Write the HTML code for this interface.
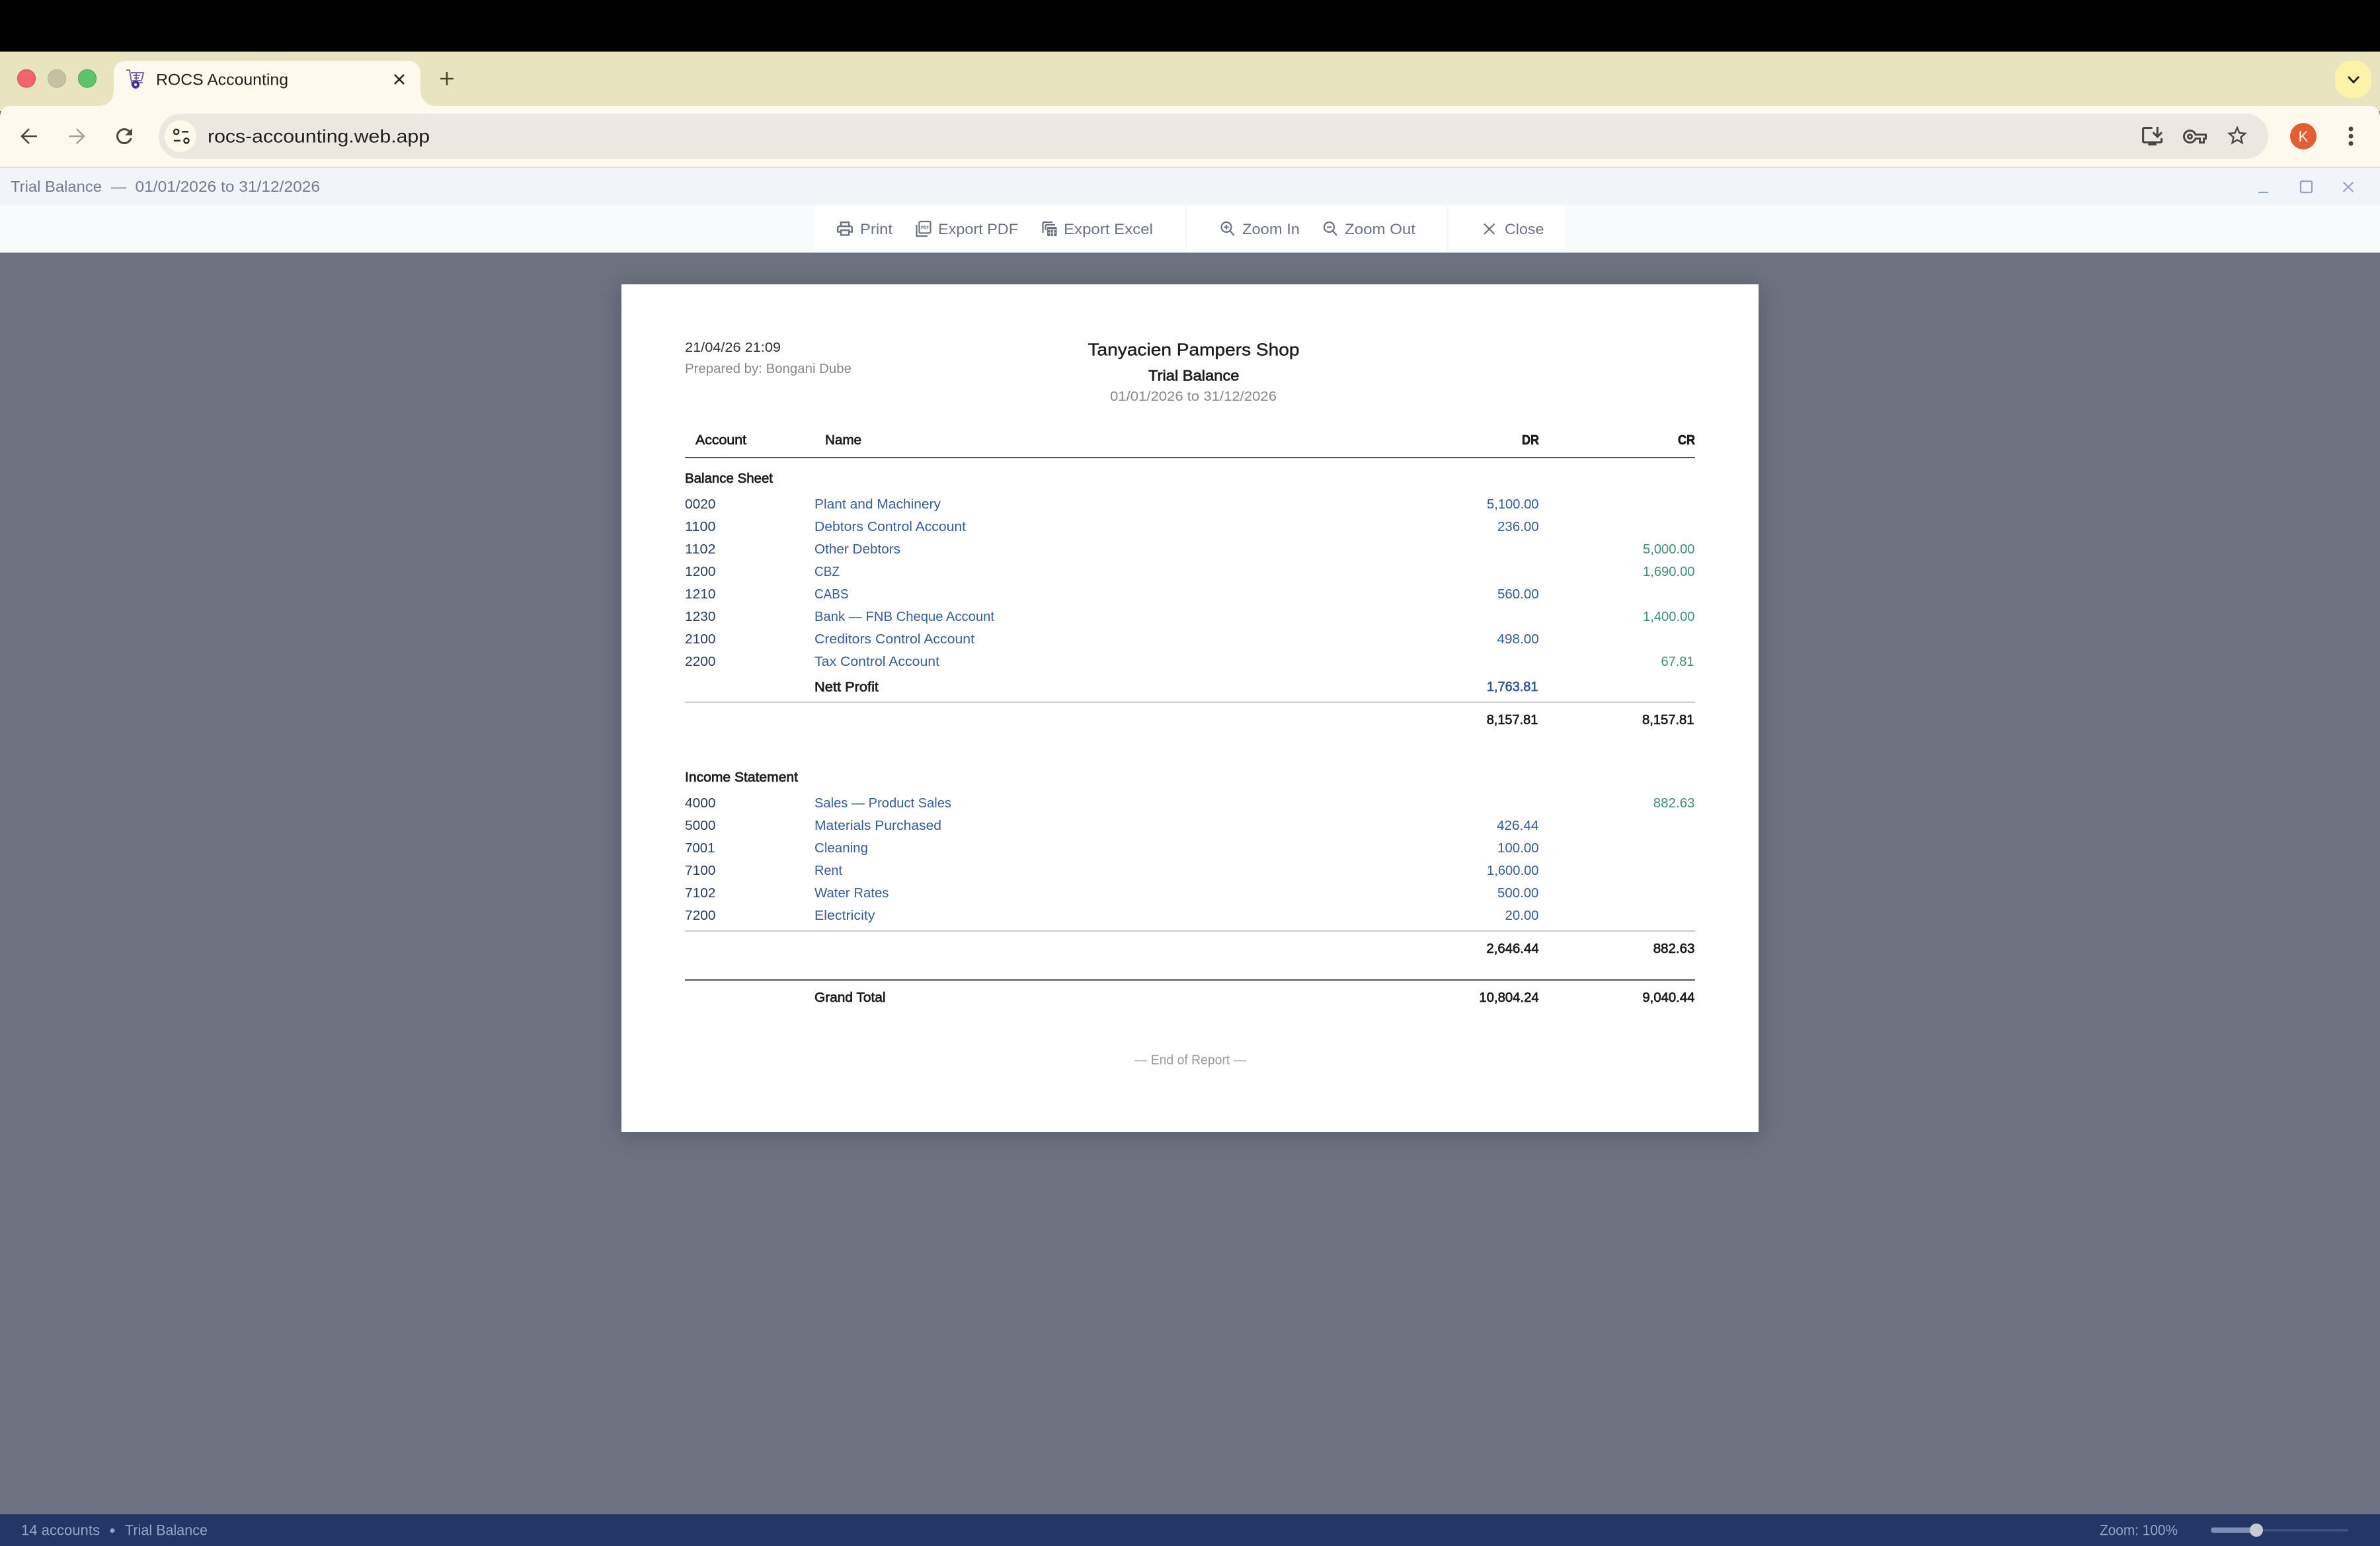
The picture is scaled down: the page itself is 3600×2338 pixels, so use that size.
<!DOCTYPE html>
<html lang="en">
<head>
<meta charset="utf-8">
<title>ROCS Accounting</title>
<style>
html,body{margin:0;padding:0;width:3600px;height:2338px;overflow:hidden;background:#6b7280}
svg{display:block;position:absolute;left:0;top:0}
text{font-family:"Liberation Sans",sans-serif;white-space:pre}
#pg{position:absolute;left:940px;top:430px;width:1720px;height:1282px;background:#fff;box-shadow:0 4px 32px rgba(0,0,0,.2)}
.r{font-size:20.7px}
.k{fill:#2b3f63}
.n{fill:#335e99}
.g{fill:#3f9070}
.m{stroke-width:.7px;fill:#1c1c1c;stroke:#1c1c1c}
.mb{stroke-width:.7px;fill:#2f5b97;stroke:#2f5b97}
.t{font-size:23px;fill:#737b8e}
.tb{font-size:22.5px;fill:#6b7280}
.s{font-size:22px;fill:#93a5c6}
.ic{fill:none;stroke:#6b7280;stroke-width:2.2}
</style>
</head>
<body>
<div id="pg"></div>
<svg width="3600" height="2338" viewBox="0 0 3600 2338" xmlns="http://www.w3.org/2000/svg">
<!-- browser chrome -->
<rect x="0" y="0" width="3600" height="78" fill="#000"/>
<rect x="0" y="78" width="3600" height="90" fill="#e9e4c0"/>
<path d="M0 254V178Q0 160 18 160H3582Q3600 160 3600 178V254Z" fill="#fdf9ec"/>
<rect x="0" y="252" width="3600" height="2" fill="#e5e2cf"/>
<path d="M148 160C165 160 172 150 172 137V112Q172 92 192 92H616Q636 92 636 112V137C636 150 645 160 660 160Z" fill="#fdf9ec"/>
<circle cx="40" cy="118.7" r="13.5" fill="#f1666a" stroke="#d9484c" stroke-width="1"/>
<circle cx="86" cy="118.7" r="13.5" fill="#c5c0a0" stroke="#b4af90" stroke-width="1"/>
<circle cx="132" cy="118.7" r="13.5" fill="#5ec36a" stroke="#45a852" stroke-width="1"/>
<!-- favicon -->
<g fill="none" stroke="#6a5aa8" stroke-width="1.8">
<path d="M191 106H196L199 125H216"/>
<path d="M198 110H217L214 122H200"/>
<path d="M201 114H212M203 118H210M206 111V121"/>
</g>
<circle cx="205" cy="128" r="6" fill="#43309a"/>
<circle cx="205" cy="128" r="2" fill="#fdf9ec"/>
<text x="236" y="128.3" font-size="24.5" fill="#1f1f1a" textLength="200" lengthAdjust="spacingAndGlyphs">ROCS Accounting</text>
<path d="M597 113L611 127M611 113L597 127" fill="none" stroke="#1f1f1a" stroke-width="2.4"/>
<path d="M676 109V129M666 119H686" fill="none" stroke="#4a4735" stroke-width="2.6"/>
<rect x="3532" y="92" width="55" height="56" rx="24" fill="#fdf3a8"/>
<path d="M3552 116L3560 124.5L3568 116" fill="none" stroke="#1f1f1a" stroke-width="2.8"/>
<!-- nav -->
<path d="M56 206H33M44 195L33 206L44 217" fill="none" stroke="#4b4a35" stroke-width="2.6"/>
<path d="M104 206H127M116 195L127 206L116 217" fill="none" stroke="#a8a598" stroke-width="2.6"/>
<path transform="translate(170 188) scale(1.5)" fill="#4b4a35" d="M17.65 6.35C16.2 4.9 14.21 4 12 4c-4.42 0-7.99 3.58-7.99 8s3.57 8 7.99 8c3.73 0 6.84-2.55 7.73-6h-2.08c-.82 2.33-3.04 4-5.65 4-3.31 0-6-2.69-6-6s2.69-6 6-6c1.66 0 3.14.69 4.22 1.78L13 11h7V4l-2.35 2.35z"/>
<rect x="240" y="172" width="3191" height="68" rx="34" fill="#ece8e1"/>
<circle cx="273" cy="206" r="24" fill="#fdf9ec"/>
<g fill="none" stroke="#2f2e22" stroke-width="2.4">
<circle cx="266.7" cy="199.3" r="3.6"/><path d="M275 199.3H285"/>
<path d="M263 212.8H273"/><circle cx="282" cy="212.8" r="3.6"/>
</g>
<text x="314" y="215.7" font-size="28" fill="#1f1f1a" textLength="336" lengthAdjust="spacingAndGlyphs">rocs-accounting.web.app</text>
<path transform="translate(3237 187.3) scale(1.55)" fill="#4a473c" d="M20 17H4V5h8V3H4c-1.11 0-2 .89-2 2v12c0 1.1.89 2 2 2h4v2h8v-2h4c1.1 0 2-.9 2-2v-3h-2v3z"/>
<path transform="translate(3237 187.3) scale(1.55)" fill="#4a473c" d="M17 14l5-5-1.41-1.41L18 10.17V3h-2v7.17l-2.59-2.58L12 9l5 5z"/>
<path transform="translate(3302 188.5) scale(1.5)" fill="#4a473c" d="M22 19h-6v-4h-2.68c-1.14 2.42-3.6 4-6.32 4-3.86 0-7-3.14-7-7s3.14-7 7-7c2.72 0 5.17 1.58 6.32 4H24v6h-2v4zm-4-2h2v-4h2v-2H11.94l-.23-.67C11.01 8.34 9.11 7 7 7c-2.76 0-5 2.24-5 5s2.24 5 5 5c2.11 0 4.01-1.34 4.71-3.33l.23-.67H18v4zM7 15c-1.65 0-3-1.35-3-3s1.35-3 3-3 3 1.35 3 3-1.35 3-3 3zm0-4c-.55 0-1 .45-1 1s.45 1 1 1 1-.45 1-1-.45-1-1-1z"/>
<path transform="translate(3366 187) scale(1.5)" fill="#4a473c" d="M22 9.24l-7.19-.62L12 2 9.19 8.63 2 9.24l5.46 4.73L5.82 21 12 17.27 18.18 21l-1.63-7.03L22 9.24zM12 15.4l-3.76 2.27 1-4.28-3.32-2.88 4.38-.38L12 6.1l1.71 4.04 4.38.38-3.32 2.88 1 4.28L12 15.4z"/>
<circle cx="3484" cy="206" r="20" fill="#e35f33"/>
<text x="3484" y="214" font-size="22" fill="#fff" text-anchor="middle">K</text>
<circle cx="3556" cy="195" r="3.5" fill="#4a473c"/><circle cx="3556" cy="206" r="3.5" fill="#4a473c"/><circle cx="3556" cy="217" r="3.5" fill="#4a473c"/>
<!-- title bar -->
<rect x="0" y="254" width="3600" height="56" fill="#f1f5fa"/>
<text class="t" x="16" y="290" textLength="138" lengthAdjust="spacingAndGlyphs">Trial Balance</text>
<text class="t" x="168" y="290" textLength="23" lengthAdjust="spacingAndGlyphs">—</text>
<text class="t" x="204.500" y="290" textLength="279.500" lengthAdjust="spacingAndGlyphs">01/01/2026 to 31/12/2026</text>
<path d="M3416 291H3431" stroke="#94a3b8" stroke-width="2.2"/>
<rect x="3480" y="274" width="17" height="17" rx="2" fill="none" stroke="#94a3b8" stroke-width="2.2"/>
<path d="M3544.500 275.500L3559.500 290M3559.500 275.500L3544.500 290" stroke="#94a3b8" stroke-width="2.2" fill="none"/>
<!-- tool bar -->
<rect x="0" y="310" width="3600" height="72" fill="#f8fafc"/>
<rect x="1232" y="312" width="1136" height="68" fill="#fff"/>
<rect x="1793" y="312" width="1.500" height="68" fill="#f1f3f6"/>
<rect x="2189" y="312" width="1.500" height="68" fill="#f1f3f6"/>
<path transform="translate(1263.6 331.4) scale(1.2)" fill="#6b7280" d="M19 8h-1V3H6v5H5c-1.66 0-3 1.34-3 3v6h4v4h12v-4h4v-6c0-1.66-1.34-3-3-3zM8 5h8v3H8V5zm8 12v2H8v-4h8v2zm2-2v-2H6v2H4v-4c0-.55.45-1 1-1h14c.55 0 1 .45 1 1v4h-2z"/>
<text class="tb" x="1301" y="354" textLength="49" lengthAdjust="spacingAndGlyphs">Print</text>
<path class="ic" d="M1386.500 340V357H1403"/>
<rect class="ic" x="1390.500" y="335" width="17" height="17.500" rx="2"/>
<text x="1393" y="346.500" font-size="7" font-weight="bold" fill="#6b7280" textLength="12" lengthAdjust="spacingAndGlyphs">PDF</text>
<text class="tb" x="1419" y="354" textLength="121" lengthAdjust="spacingAndGlyphs">Export PDF</text>
<path class="ic" d="M1577.500 352V338Q1577.500 336 1579.500 336H1592"/>
<path class="ic" d="M1581.500 348V342Q1581.500 340 1583.500 340H1596"/>
<rect x="1584" y="343" width="14.500" height="14" rx="1.500" fill="#6b7280"/>
<path d="M1585 347.500H1597.500M1589 347.500V357M1593.500 347.500V357M1585 352.300H1597.500" stroke="#fff" stroke-width="1.200" fill="none"/>
<text class="tb" x="1609" y="354" textLength="135" lengthAdjust="spacingAndGlyphs">Export Excel</text>
<circle class="ic" cx="1855" cy="343.500" r="7.500"/>
<path class="ic" d="M1860.500 349L1866.500 356M1851.500 343.500H1858.500M1855 340V347"/>
<text class="tb" x="1879" y="354" textLength="87" lengthAdjust="spacingAndGlyphs">Zoom In</text>
<circle class="ic" cx="2010.500" cy="343.500" r="7.500"/>
<path class="ic" d="M2016 349L2022 356M2007 343.500H2014"/>
<text class="tb" x="2034" y="354" textLength="107" lengthAdjust="spacingAndGlyphs">Zoom Out</text>
<path class="ic" d="M2245 338.500L2260.500 354M2260.500 338.500L2245 354"/>
<text class="tb" x="2276" y="354" textLength="59.500" lengthAdjust="spacingAndGlyphs">Close</text>

<!-- report header -->
<text x="1036" y="532" font-size="20.7" fill="#333" textLength="145" lengthAdjust="spacingAndGlyphs">21/04/26 21:09</text>
<text x="1036" y="564" font-size="20.7" fill="#888" textLength="252" lengthAdjust="spacingAndGlyphs">Prepared by: Bongani Dube</text>
<text x="1645.500" y="537.300" font-size="26" fill="#1c1c1c" stroke="#1c1c1c" stroke-width=".4" textLength="320" lengthAdjust="spacingAndGlyphs">Tanyacien Pampers Shop</text>
<text class="m" x="1737" y="575.700" font-size="22.500" textLength="137.500" lengthAdjust="spacingAndGlyphs">Trial Balance</text>
<text x="1679" y="606" font-size="20.7" fill="#888" textLength="252" lengthAdjust="spacingAndGlyphs">01/01/2026 to 31/12/2026</text>

<text class="r m" x="1052" y="672" textLength="77" lengthAdjust="spacingAndGlyphs">Account</text>
<text class="r m" x="1248" y="672" textLength="55" lengthAdjust="spacingAndGlyphs">Name</text>
<text class="r m" x="2302" y="672" font-weight="bold" textLength="26" lengthAdjust="spacingAndGlyphs">DR</text>
<text class="r m" x="2538" y="672" font-weight="bold" textLength="26" lengthAdjust="spacingAndGlyphs">CR</text>
<rect x="1036" y="691" width="1528" height="2" fill="#555"/>

<text class="r m" x="1036" y="730" textLength="133" lengthAdjust="spacingAndGlyphs">Balance Sheet</text>

<text class="r k" x="1036" y="769" textLength="46.500" lengthAdjust="spacingAndGlyphs">0020</text>
<text class="r n" x="1232" y="769" textLength="191" lengthAdjust="spacingAndGlyphs">Plant and Machinery</text>
<text class="r n" x="2249" y="769" textLength="78.500" lengthAdjust="spacingAndGlyphs">5,100.00</text>

<text class="r k" x="1036" y="803" textLength="46.500" lengthAdjust="spacingAndGlyphs">1100</text>
<text class="r n" x="1232" y="803" textLength="229" lengthAdjust="spacingAndGlyphs">Debtors Control Account</text>
<text class="r n" x="2265" y="803" textLength="62.700" lengthAdjust="spacingAndGlyphs">236.00</text>

<text class="r k" x="1036" y="837" textLength="46.500" lengthAdjust="spacingAndGlyphs">1102</text>
<text class="r n" x="1232" y="837" textLength="130" lengthAdjust="spacingAndGlyphs">Other Debtors</text>
<text class="r g" x="2485" y="837" textLength="78.500" lengthAdjust="spacingAndGlyphs">5,000.00</text>

<text class="r k" x="1036" y="871" textLength="46.500" lengthAdjust="spacingAndGlyphs">1200</text>
<text class="r n" x="1232" y="871" textLength="38" lengthAdjust="spacingAndGlyphs">CBZ</text>
<text class="r g" x="2485" y="871" textLength="78.500" lengthAdjust="spacingAndGlyphs">1,690.00</text>

<text class="r k" x="1036" y="905" textLength="46.500" lengthAdjust="spacingAndGlyphs">1210</text>
<text class="r n" x="1232" y="905" textLength="51.500" lengthAdjust="spacingAndGlyphs">CABS</text>
<text class="r n" x="2265" y="905" textLength="62.700" lengthAdjust="spacingAndGlyphs">560.00</text>

<text class="r k" x="1036" y="939" textLength="46.500" lengthAdjust="spacingAndGlyphs">1230</text>
<text class="r n" x="1232" y="939" textLength="272" lengthAdjust="spacingAndGlyphs">Bank — FNB Cheque Account</text>
<text class="r g" x="2485" y="939" textLength="78.500" lengthAdjust="spacingAndGlyphs">1,400.00</text>

<text class="r k" x="1036" y="973" textLength="46.500" lengthAdjust="spacingAndGlyphs">2100</text>
<text class="r n" x="1232" y="973" textLength="242" lengthAdjust="spacingAndGlyphs">Creditors Control Account</text>
<text class="r n" x="2264.500" y="973" textLength="63.300" lengthAdjust="spacingAndGlyphs">498.00</text>

<text class="r k" x="1036" y="1007" textLength="46.500" lengthAdjust="spacingAndGlyphs">2200</text>
<text class="r n" x="1232" y="1007" textLength="189" lengthAdjust="spacingAndGlyphs">Tax Control Account</text>
<text class="r g" x="2512.500" y="1007" textLength="50" lengthAdjust="spacingAndGlyphs">67.81</text>

<text class="r m" x="1232" y="1045.500" textLength="97" lengthAdjust="spacingAndGlyphs">Nett Profit</text>
<text class="r mb" x="2249" y="1045" textLength="77.400" lengthAdjust="spacingAndGlyphs">1,763.81</text>
<rect x="1036" y="1061" width="1528" height="2" fill="#ccc"/>
<text class="r m" x="2248.700" y="1095" textLength="77.600" lengthAdjust="spacingAndGlyphs">8,157.81</text>
<text class="r m" x="2484" y="1095" textLength="78.400" lengthAdjust="spacingAndGlyphs">8,157.81</text>

<text class="r m" x="1036" y="1182" textLength="171" lengthAdjust="spacingAndGlyphs">Income Statement</text>

<text class="r k" x="1036" y="1221" textLength="46.500" lengthAdjust="spacingAndGlyphs">4000</text>
<text class="r n" x="1232" y="1221" textLength="207" lengthAdjust="spacingAndGlyphs">Sales — Product Sales</text>
<text class="r g" x="2500.700" y="1221" textLength="62.700" lengthAdjust="spacingAndGlyphs">882.63</text>

<text class="r k" x="1036" y="1255" textLength="46.500" lengthAdjust="spacingAndGlyphs">5000</text>
<text class="r n" x="1232" y="1255" textLength="192" lengthAdjust="spacingAndGlyphs">Materials Purchased</text>
<text class="r n" x="2264" y="1255" textLength="63.400" lengthAdjust="spacingAndGlyphs">426.44</text>

<text class="r k" x="1036" y="1289" textLength="45.500" lengthAdjust="spacingAndGlyphs">7001</text>
<text class="r n" x="1232" y="1289" textLength="81" lengthAdjust="spacingAndGlyphs">Cleaning</text>
<text class="r n" x="2265" y="1289" textLength="62.700" lengthAdjust="spacingAndGlyphs">100.00</text>

<text class="r k" x="1036" y="1323" textLength="46.500" lengthAdjust="spacingAndGlyphs">7100</text>
<text class="r n" x="1232" y="1323" textLength="42" lengthAdjust="spacingAndGlyphs">Rent</text>
<text class="r n" x="2249" y="1323" textLength="78.500" lengthAdjust="spacingAndGlyphs">1,600.00</text>

<text class="r k" x="1036" y="1357" textLength="46.500" lengthAdjust="spacingAndGlyphs">7102</text>
<text class="r n" x="1232" y="1357" textLength="112.500" lengthAdjust="spacingAndGlyphs">Water Rates</text>
<text class="r n" x="2265" y="1357" textLength="62.400" lengthAdjust="spacingAndGlyphs">500.00</text>

<text class="r k" x="1036" y="1391" textLength="46.500" lengthAdjust="spacingAndGlyphs">7200</text>
<text class="r n" x="1232" y="1391" textLength="91.500" lengthAdjust="spacingAndGlyphs">Electricity</text>
<text class="r n" x="2276.500" y="1391" textLength="51" lengthAdjust="spacingAndGlyphs">20.00</text>

<rect x="1036" y="1407" width="1528" height="2" fill="#ccc"/>
<text class="r m" x="2248.400" y="1441" textLength="79.300" lengthAdjust="spacingAndGlyphs">2,646.44</text>
<text class="r m" x="2500.700" y="1441" textLength="62.700" lengthAdjust="spacingAndGlyphs">882.63</text>
<rect x="1036" y="1481" width="1528" height="2" fill="#555"/>
<text class="r m" x="1232" y="1515" textLength="107.500" lengthAdjust="spacingAndGlyphs">Grand Total</text>
<text class="r m" x="2237.400" y="1515" textLength="90.300" lengthAdjust="spacingAndGlyphs">10,804.24</text>
<text class="r m" x="2484.400" y="1515" textLength="79" lengthAdjust="spacingAndGlyphs">9,040.44</text>

<text x="1716" y="1609.600" font-size="20.7" fill="#999" textLength="169" lengthAdjust="spacingAndGlyphs">— End of Report —</text>

<!-- status bar -->
<rect x="0" y="2290" width="3600" height="48" fill="#223766"/>
<text class="s" x="32" y="2321.700" textLength="119" lengthAdjust="spacingAndGlyphs">14 accounts</text>
<circle cx="170" cy="2314.700" r="3.500" fill="#93a5c6"/>
<text class="s" x="189" y="2321.700" textLength="125" lengthAdjust="spacingAndGlyphs">Trial Balance</text>
<text class="s" x="3176" y="2321.700" textLength="118" lengthAdjust="spacingAndGlyphs">Zoom: 100%</text>
<rect x="3400" y="2312" width="152" height="4" rx="2" fill="#3c5382"/>
<rect x="3344" y="2310" width="72" height="8" rx="4" fill="#7b8fb5"/>
<circle cx="3413" cy="2314" r="10" fill="#c5cbd6"/>
</svg>
</body>
</html>
